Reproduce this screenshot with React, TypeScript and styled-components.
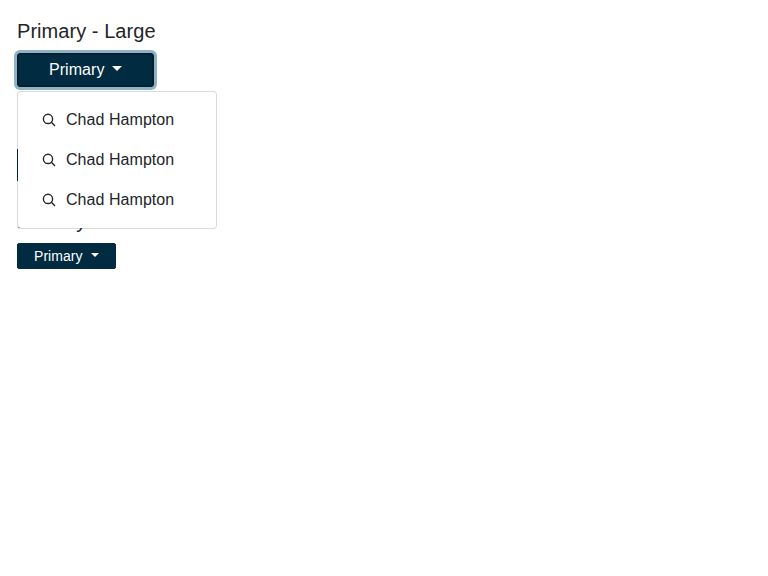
import React from "react";
import styled, { createGlobalStyle } from "styled-components";

const GlobalStyle = createGlobalStyle`
  *, *::before, *::after { box-sizing: border-box; }
  body {
    margin: 0;
    background: #fff;
    color: #212529;
    font-family: "Liberation Sans", Arial, sans-serif;
    font-size: 16px;
    line-height: 1.5;
    letter-spacing: 0.05px;
  }
`;

const Page = styled.main`
  padding: 19px 17px;
`;

const Title = styled.h5`
  margin: 0 0 10px;
  font-size: 20px;
  font-weight: 400;
  line-height: 24px;
`;

const Dropdown = styled.div`
  position: relative;
  display: flex;
  margin-bottom: 27px;
`;

const sizes = {
  large: { width: 137, height: 34, font: 16, pad: 31, caret: 5 },
  medium: { width: 121, height: 34, font: 16, pad: 23, caret: 5 },
  small: { width: 99, height: 26, font: 14, pad: 16, caret: 4 },
};

const Toggle = styled.button<{ $size: keyof typeof sizes; $focused?: boolean }>`
  display: flex;
  align-items: center;
  width: ${(p) => sizes[p.$size].width}px;
  height: ${(p) => sizes[p.$size].height}px;
  padding: 0 0 0 ${(p) => sizes[p.$size].pad}px;
  border: 1px solid ${(p) => (p.$focused ? "#001b29" : "#002b40")};
  border-radius: ${(p) => (p.$focused ? 3 : 2)}px;
  background: #002b40;
  color: #fff;
  font-family: inherit;
  font-size: ${(p) => sizes[p.$size].font}px;
  letter-spacing: inherit;
  box-shadow: ${(p) => (p.$focused ? "inset 0 0 0 1px #001f2f, 0 0 0 3px #8fb3c6" : "none")};

  &::after {
    content: "";
    margin-left: 8px;
    margin-bottom: 3px;
    border-top: ${(p) => sizes[p.$size].caret}px solid;
    border-right: ${(p) => sizes[p.$size].caret}px solid transparent;
    border-left: ${(p) => sizes[p.$size].caret}px solid transparent;
  }
`;

const Menu = styled.ul`
  position: absolute;
  top: 38px;
  left: 0;
  z-index: 10;
  width: 200px;
  margin: 0;
  padding: 8px 0;
  list-style: none;
  background: #fff;
  background-clip: padding-box;
  border: 1px solid rgba(0, 0, 0, 0.15);
  border-radius: 4px;
`;

const MenuItem = styled.li`
  display: flex;
  align-items: center;
  gap: 10px;
  height: 40px;
  padding: 0 24px;
`;

const SearchIcon = () => (
  <svg width="14" height="14" viewBox="0 0 14 14" fill="none" stroke="#212529" strokeWidth="1.4">
    <circle cx="6" cy="5.9" r="4.6" />
    <path d="M9.2 9.1 13 12.9" />
  </svg>
);

export default function App() {
  return (
    <>
      <GlobalStyle />
      <Page>
        <Title>Primary - Large</Title>
        <Dropdown>
          <Toggle $size="large" $focused>Primary</Toggle>
          <Menu>
            {[0, 1, 2].map((i) => (
              <MenuItem key={i}>
                <SearchIcon />
                Chad Hampton
              </MenuItem>
            ))}
          </Menu>
        </Dropdown>
        <Title>Primary</Title>
        <Dropdown>
          <Toggle $size="medium">Primary</Toggle>
        </Dropdown>
        <Title>Primary</Title>
        <Dropdown>
          <Toggle $size="small">Primary</Toggle>
        </Dropdown>
      </Page>
    </>
  );
}
